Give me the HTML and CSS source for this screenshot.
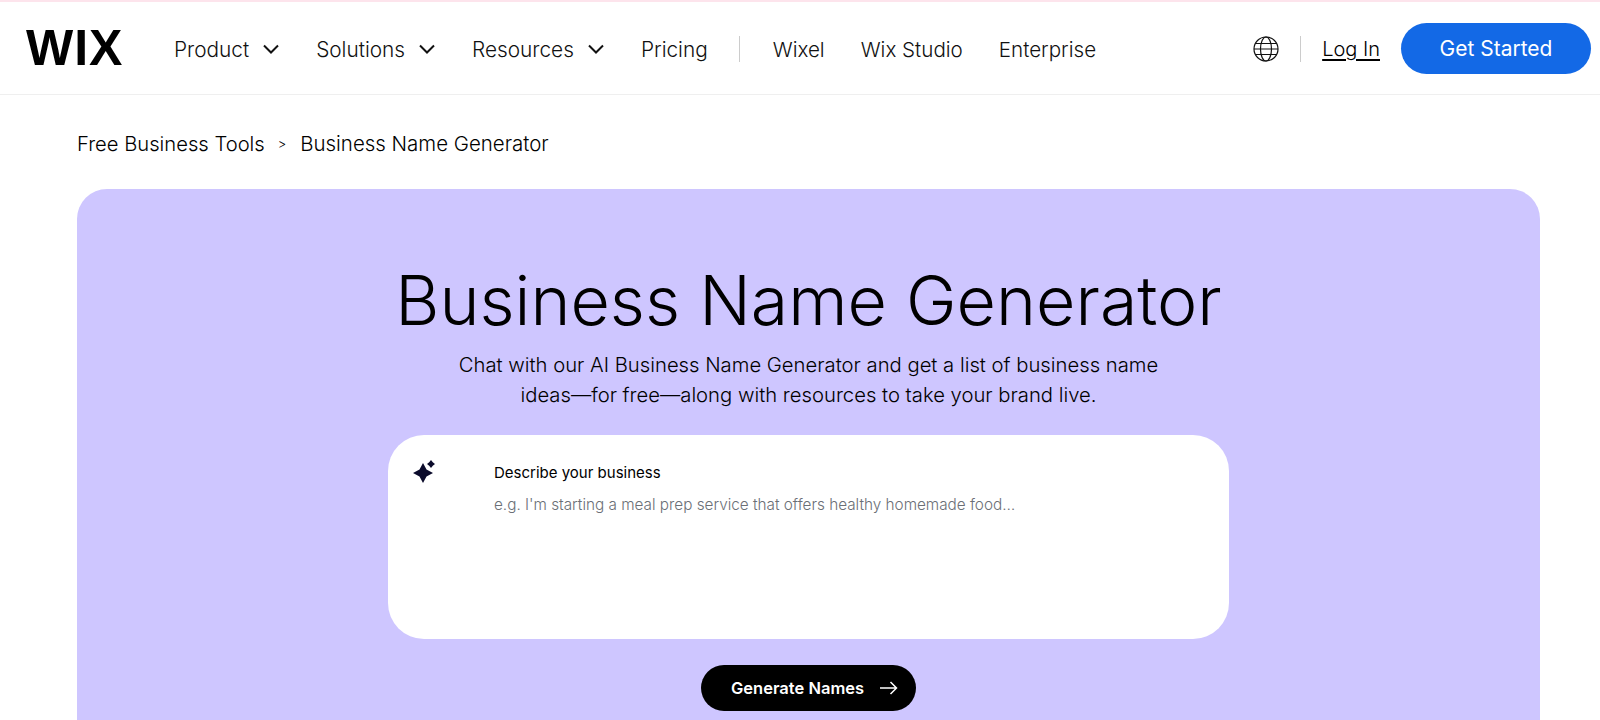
FILE: index.html
```html
<!DOCTYPE html>
<html lang="en">
<head>
<meta charset="UTF-8">
<title>Business Name Generator</title>
<meta name="viewport" content="width=device-width, initial-scale=1.0">
<link rel="stylesheet" href="styles.css">
</head>
<body>
<header class="site-header">
    <a href="#" class="logo">WIX</a>
    <nav class="main-nav">
        <a href="#" class="nav-item">Product
            <svg class="chevron" width="16" height="10" viewBox="0 0 16 10"><path d="M1 1.500 8 8.500l7-7"/></svg>
        </a>
        <a href="#" class="nav-item">Solutions
            <svg class="chevron" width="16" height="10" viewBox="0 0 16 10"><path d="M1 1.500 8 8.500l7-7"/></svg>
        </a>
        <a href="#" class="nav-item">Resources
            <svg class="chevron" width="16" height="10" viewBox="0 0 16 10"><path d="M1 1.500 8 8.500l7-7"/></svg>
        </a>
        <a href="#" class="nav-item">Pricing</a>
        <span class="nav-divider"></span>
        <a href="#" class="nav-item nav-item-plain">Wixel</a>
        <a href="#" class="nav-item nav-item-plain">Wix Studio</a>
        <a href="#" class="nav-item nav-item-plain">Enterprise</a>
    </nav>
    <div class="header-actions">
        <svg class="globe" width="26" height="26" viewBox="0 0 26 26">
            <circle cx="13" cy="13" r="12"/>
            <ellipse cx="13" cy="13" rx="5.500" ry="12"/>
            <path d="M2.600 7.500h20.800M1 13h24M2.600 18.500h20.800"/>
        </svg>
        <span class="actions-divider"></span>
        <a href="#" class="login">Log In</a>
        <a href="#" class="get-started">Get Started</a>
    </div>
</header>

<main class="page">
    <div class="breadcrumbs">
        <a href="#">Free Business Tools</a>
        <span class="crumb-sep">&gt;</span>
        <a href="#" class="crumb-current">Business Name Generator</a>
    </div>

    <section class="hero">
        <h1>Business Name Generator</h1>
        <p class="hero-text">Chat with our AI Business Name Generator and get a list of business name<br>ideas—for free—along with resources to take your brand live.</p>
        <div class="prompt-box">
            <svg class="sparkle" width="24" height="24" viewBox="0 0 24 24">
                <path d="M11 4 14.500 10.500 21 14 14.500 17.500 11 24 7.500 17.500 1 14 7.500 10.500z"/>
                <path d="M19 1l1.800 2.200L23 5l-2.200 1.800L19 9l-1.800-2.200L15 5l2.200-1.800z"/>
            </svg>
            <div class="prompt-fields">
                <label class="prompt-label">Describe your business</label>
                <div class="prompt-placeholder">e.g. I'm starting a meal prep service that offers healthy homemade food…</div>
            </div>
        </div>
        <a href="#" class="generate">Generate Names
            <svg width="18" height="14" viewBox="0 0 18 14"><path d="M0 7h16.500M10.500 1l6 6-6 6"/></svg>
        </a>
    </section>
</main>
</body>
</html>
```

FILE: styles.css
```css
html, body {
    height: 720px;
    overflow: hidden;
}

body {
    font-family: Inter, "Noto Sans", Arial, sans-serif;
    color: #000;
    background-color: #fff;
    margin: 0;
    padding: 0;
}

a {
    color: inherit;
    text-decoration: none;
}

.site-header {
    height: 92px;
    display: flex;
    align-items: center;
    border-top: 2px solid #fde4ec;
    border-bottom: 1px solid #efefef;
    padding-left: 26px;
    padding-right: 9px;
}

.logo {
    width: 96px;
    font-family: "Liberation Sans", Arial, sans-serif;
    font-size: 50px;
    font-weight: 700;
    letter-spacing: 1px;
    line-height: 1;
    color: #000;
}

.main-nav {
    display: flex;
    align-items: center;
    margin-left: 52px;
    margin-top: 2px;
    font-size: 20.800px;
    font-weight: 300;
}

.nav-item {
    display: flex;
    align-items: center;
    gap: 14px;
    margin-right: 37px;
    color: #111;
}

.nav-item-plain {
    font-size: 20.600px;
    margin-right: 36px;
}

.chevron path {
    fill: none;
    stroke: #111;
    stroke-width: 2;
}

.nav-divider {
    width: 1px;
    height: 26px;
    background-color: #ccc;
    margin-left: -6px;
    margin-right: 33px;
}

.header-actions {
    display: flex;
    align-items: center;
    margin-left: auto;
}

.globe {
    margin-top: 2px;
}

.globe * {
    fill: none;
    stroke: #111;
    stroke-width: 1.200;
}

.actions-divider {
    width: 1px;
    height: 26px;
    background-color: #ccc;
    margin: 2px 21px 0;
}

.login {
    font-size: 20px;
    font-weight: 300;
    text-decoration: underline;
    text-underline-offset: 3px;
    margin-top: 2px;
    margin-right: 21px;
}

.get-started {
    width: 190px;
    height: 51px;
    display: flex;
    align-items: center;
    justify-content: center;
    background-color: #1369e6;
    color: #fff;
    border-radius: 26px;
    font-size: 21px;
}

.page {
    padding: 0 60px 0 77px;
}

.breadcrumbs {
    display: flex;
    align-items: center;
    height: 91px;
    padding-top: 3px;
    font-size: 20.200px;
    font-weight: 300;
}

.crumb-sep {
    font-size: 13px;
    margin: 0 14px 0 13px;
}

.crumb-current {
    font-size: 20.450px;
}

.hero {
    background-color: #cec6ff;
    border-radius: 30px;
    height: 560px;
    padding-top: 73px;
    box-sizing: border-box;
    display: flex;
    flex-direction: column;
    align-items: center;
}

h1 {
    font-size: 68px;
    font-weight: 300;
    line-height: 76px;
    margin: 0;
}

.hero-text {
    font-size: 20.250px;
    font-weight: 300;
    line-height: 30px;
    text-align: center;
    margin: 12px 0 0;
}

.prompt-box {
    width: 841px;
    height: 204px;
    background-color: #fff;
    border-radius: 36px;
    margin-top: 25px;
    display: flex;
    box-sizing: border-box;
    padding: 24px;
}

.sparkle {
    fill: #0b0b2b;
    flex-shrink: 0;
}

.prompt-fields {
    margin-left: 58px;
    padding-top: 4px;
}

.prompt-label {
    display: block;
    font-size: 15px;
    line-height: 20px;
}

.prompt-placeholder {
    font-size: 15.300px;
    font-weight: 300;
    line-height: 20px;
    margin-top: 12px;
    color: #6b6f76;
}

.generate {
    width: 215px;
    height: 46px;
    margin-top: 26px;
    padding-left: 30px;
    box-sizing: border-box;
    display: flex;
    align-items: center;
    gap: 16px;
    background-color: #000;
    color: #fff;
    border-radius: 23px;
    font-size: 16.500px;
    font-weight: 600;
}

.generate svg path {
    fill: none;
    stroke: #fff;
    stroke-width: 1.500;
}
```
